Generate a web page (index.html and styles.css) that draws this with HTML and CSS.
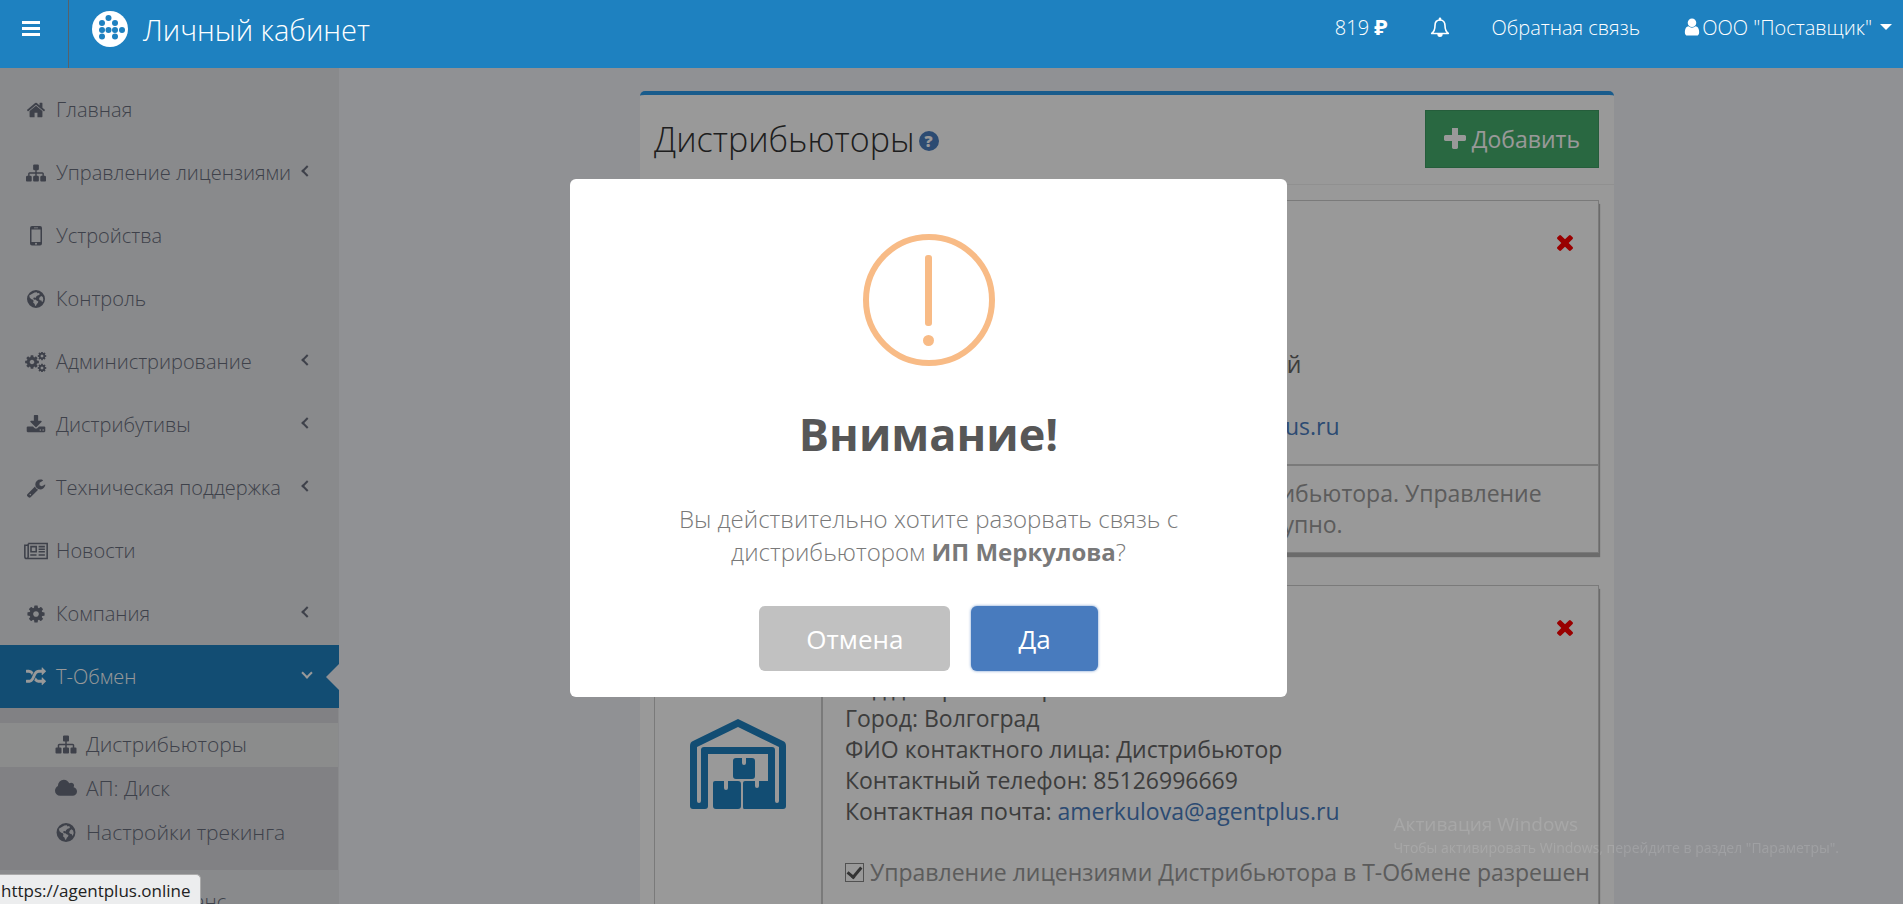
FILE: index.html
```html
<!DOCTYPE html>
<html lang="ru">
<head>
    <meta charset="UTF-8">
    <meta name="viewport" content="width=device-width, initial-scale=1.0">
    <title>Личный кабинет</title>
    <link rel="stylesheet" href="styles.css">
</head>
<body>
    <!-- Icon set -->
    <svg class="sprite" aria-hidden="true">
        <symbol id="i-home" viewBox="0 0 1792 1792"><path d="M1472 992v480q0 26-19 45t-45 19h-384v-384h-256v384h-384q-26 0-45-19t-19-45v-480q0-1 .5-3t.5-3l575-474 575 474q1 2 1 6zm223-69l-62 74q-8 9-21 11h-3q-13 0-21-7l-692-577-692 577q-12 8-24 7-13-2-21-11l-62-74q-8-10-7-23.5t11-21.5l719-599q32-26 76-26t76 26l244 204v-195q0-14 9-23t23-9h192q14 0 23 9t9 23v408l219 182q10 8 11 21.5t-7 23.5z"/></symbol>
        <symbol id="i-sitemap" viewBox="0 0 1792 1792"><path d="M1792 1248v320q0 40-28 68t-68 28h-320q-40 0-68-28t-28-68v-320q0-40 28-68t68-28h96v-192h-512v192h96q40 0 68 28t28 68v320q0 40-28 68t-68 28h-320q-40 0-68-28t-28-68v-320q0-40 28-68t68-28h96v-192h-512v192h96q40 0 68 28t28 68v320q0 40-28 68t-68 28h-320q-40 0-68-28t-28-68v-320q0-40 28-68t68-28h96v-192q0-52 38-90t90-38h512v-192h-96q-40 0-68-28t-28-68v-320q0-40 28-68t68-28h320q40 0 68 28t28 68v320q0 40-28 68t-68 28h-96v192h512q52 0 90 38t38 90v192h96q40 0 68 28t28 68z"/></symbol>
        <symbol id="i-mobile" viewBox="0 0 20 20"><path fill-rule="evenodd" d="M6 0h8a2 2 0 0 1 2 2v15.500a2 2 0 0 1-2 2H6a2 2 0 0 1-2-2V2a2 2 0 0 1 2-2zm-.5 3.500v12.500h9V3.500zm2.500-2v.7h4v-.7zM10 16.700a1 1 0 1 0 0 2 1 1 0 0 0 0-2z"/></symbol>
        <symbol id="i-globe" viewBox="0 0 20 20"><path fill-rule="evenodd" d="M10 1a9 9 0 1 1 0 18 9 9 0 0 1 0-18zM3.200 6.500l.6 2.200 1.700 1.500 1.500.6.6 1.300-.5 1.500 1.600 1.300.4 2 1-.3.7-1.700 1.200-1.200.3-1.300-1.800-.8-1-1-1.400.1-.8-.9.2-1 1.300-.3.9.5.3-1.200 1.500-1.300 1.700-.6.600-.9-.9-1.100-1.500.3-.6-1-2.300.2zM15.200 7l-1.500 1.200-.7 1.700.9 1.300 1.500.2.600 1.700.6-.4.700-2.300-.5-2.400z"/></symbol>
        <symbol id="i-cog" viewBox="0 0 1792 1792"><path d="M1152 896q0-106-75-181t-181-75-181 75-75 181 75 181 181 75 181-75 75-181zm512-109v222q0 12-8 23t-20 13l-185 28q-19 54-39 91 35 50 107 138 10 12 10 25t-9 23q-27 37-99 108t-94 71q-12 0-26-9l-138-108q-44 23-91 38-16 136-29 186-7 28-36 28h-222q-14 0-24.500-8.500t-11.500-21.500l-28-184q-49-16-90-37l-141 107q-10 9-25 9-14 0-25-11-126-114-165-168-7-10-7-23 0-12 8-23 15-21 51-66.500t54-70.500q-27-50-41-99l-183-27q-13-2-21-12.500t-8-23.500v-222q0-12 8-23t19-13l186-28q14-46 39-92-40-57-107-138-10-12-10-24 0-10 9-23 26-36 98.500-107.500t94.500-71.500q13 0 26 10l138 107q44-23 91-38 16-136 29-186 7-28 36-28h222q14 0 24.500 8.500t11.500 21.500l28 184q49 16 90 37l142-107q9-9 24-9 13 0 25 10 129 119 165 170 7 8 7 22 0 12-8 23-15 21-51 66.500t-54 70.500q26 50 41 98l183 28q13 2 21 12.500t8 23.500z"/></symbol>
        <symbol id="i-cogs" viewBox="0 0 24 20"><use href="#i-cog" x="0" y="2" width="16" height="16"/><use href="#i-cog" x="13" y="-1" width="10" height="10"/><use href="#i-cog" x="13" y="11" width="10" height="10"/></symbol>
        <symbol id="i-download" viewBox="0 0 1792 1792"><path d="M1344 1344q0-26-19-45t-45-19-45 19-19 45 19 45 45 19 45-19 19-45zm256 0q0-26-19-45t-45-19-45 19-19 45 19 45 45 19 45-19 19-45zm128-224v320q0 40-28 68t-68 28h-1472q-40 0-68-28t-28-68v-320q0-40 28-68t68-28h465l135 136q58 56 136 56t136-56l136-136h464q40 0 68 28t28 68zm-325-569q17 41-14 70l-448 448q-18 19-45 19t-45-19l-448-448q-31-29-14-70 17-39 59-39h256v-448q0-26 19-45t45-19h256q26 0 45 19t19 45v448h256q42 0 59 39z"/></symbol>
        <symbol id="i-wrench" viewBox="0 0 1792 1792"><path d="M448 1472q0-26-19-45t-45-19-45 19-19 45 19 45 45 19 45-19 19-45zm644-420l-682 682q-37 37-90 37-52 0-91-37l-106-108q-38-36-38-90 0-53 38-91l681-681q39 98 114.500 173.500t173.500 114.500zm634-435q0 39-23 106-47 134-164.500 217.500t-258.500 83.500q-185 0-316.500-131.500t-131.500-316.500 131.500-316.500 316.500-131.500q58 0 121.500 16.500t107.500 46.500q16 11 16 28t-16 28l-293 169v224l193 107q5-3 79-48.500t135.500-81 70.500-35.500q15 0 23.500 10t8.500 25z"/></symbol>
        <symbol id="i-news" viewBox="0 0 23 16"><path fill="none" stroke="currentColor" stroke-width="1.500" d="M4 .8h18.200v14.400H2.500A1.700 1.700 0 0 1 .8 13.500V2.500H4M4 1v12.500q0 1.700-1.500 1.700"/><path fill="none" stroke="currentColor" stroke-width="1.500" d="M6.700 3.800h5v5h-5zM14 3.800h6M14 6.300h6M14 8.800h6M6 11.800h6M14 11.800h6"/></symbol>
        <symbol id="i-random" viewBox="0 0 1792 1792"><path d="M666 481q-60 92-137 273-22-45-37-72.500t-40.500-63.500-51-56.500-63-35-81.500-14.500h-224q-14 0-23-9t-9-23v-192q0-14 9-23t23-9h224q250 0 410 225zm1126 799q0 14-9 23l-320 320q-9 9-23 9-13 0-22.500-9.500t-9.500-22.500v-192q-32 0-85 .5t-81 1-73-1-71-5-64-10.500-63-18.500-58-28.500-59-40-55-53.500-56-69.500q59-93 136-273 22 45 37 72.500t40.500 63.500 51 56.500 63 35 81.500 14.500h256v-192q0-14 9-23t23-9q12 0 24 10l319 319q9 9 9 23zm0-896q0 14-9 23l-320 320q-9 9-23 9-13 0-22.500-9.500t-9.500-22.500v-192h-256q-48 0-87 15t-69 45-51 61.500-45 77.500q-32 62-78 171-29 66-49.500 111t-54 105-64 100-74 83-90 68.500-106.500 42-128 16.500h-224q-14 0-23-9t-9-23v-192q0-14 9-23t23-9h224q48 0 87-15t69-45 51-61.500 45-77.500q32-62 78-171 29-66 49.500-111t54-105 64-100 74-83 90-68.500 106.500-42 128-16.500h256v-192q0-14 9-23t23-9q12 0 24 10l319 319q9 9 9 23z"/></symbol>
        <symbol id="i-cloud" viewBox="-64 0 1920 1792"><path d="M1856 1152q0 159-112.500 271.500t-271.500 112.500h-1088q-185 0-316.500-131.500t-131.500-316.500q0-132 71-241.500t187-163.500q-2-28-2-43 0-212 150-362t362-150q158 0 286.500 88t187.500 230q70-62 166-62 106 0 181 75t75 181q0 75-41 138 129 30 213 134.500t84 239.500z"/></symbol>
        <symbol id="i-user" viewBox="0 0 1792 1792"><path d="M1536 1399q0 109-62.500 187t-150.500 78h-854q-88 0-150.500-78t-62.500-187q0-85 8.500-160.500t31.500-152 58.500-131 94-89 134.500-34.500q131 128 313 128t313-128q76 0 134.500 34.500t94 89 58.500 131 31.500 152 8.500 160.500zm-256-887q0 159-112.500 271.500t-271.500 112.500-271.500-112.500-112.500-271.500 112.500-271.500 271.500-112.500 271.500 112.500 112.500 271.500z"/></symbol>
        <symbol id="i-plus" viewBox="192 192 1408 1408"><path d="M1600 736v192q0 40-28 68t-68 28h-416v416q0 40-28 68t-68 28h-192q-40 0-68-28t-28-68v-416h-416q-40 0-68-28t-28-68v-192q0-40 28-68t68-28h416v-416q0-40 28-68t68-28h192q40 0 68 28t28 68v416h416q40 0 68 28t28 68z"/></symbol>
        <symbol id="i-times" viewBox="302 366 1188 1188"><path d="M1490 1322q0 40-28 68l-136 136q-28 28-68 28t-68-28l-294-294-294 294q-28 28-68 28t-68-28l-136-136q-28-28-28-68t28-68l294-294-294-294q-28-28-28-68t28-68l136-136q28-28 68-28t68 28l294 294 294-294q28-28 68-28t68 28l136 136q28 28 28 68t-28 68l-294 294 294 294q28 28 28 68z"/></symbol>
        <symbol id="i-warehouse" viewBox="0 0 96 90">
            <path fill-rule="evenodd" d="M48 0l45 22q3 1 3 5v60q0 3-3 3H54q-1 0-1-2V64q0-2 2-2h10v5q0 2 2 2t2-2v-5h9V35H18v52q0 3-3 3H3q-3 0-3-3V27q0-4 3-5zm0 8L7 28v54q0 2 2 2t2-2V31q0-3 3-3h68q3 0 3 3v51q0 2 2 2t2-2V28z"/>
            <path d="M25 62h9v7q0 2 2 2t2-2v-7h10q3 0 3 3v22q0 3-3 3H26q-3 0-3-3V64q0-2 2-2zM46 39h6v5q0 2 2 2t2-2v-5h6q3 0 3 3v15q0 3-3 3H46q-3 0-3-3V42q0-3 3-3z"/>
        </symbol>
    </svg>

    <header class="topbar">
        <button class="menu-btn" type="button" aria-label="Меню"><span></span><span></span><span></span></button>
        <a class="brand" href="#">
            <svg class="brand-logo" viewBox="0 0 36 36" aria-hidden="true">
                <circle cx="18" cy="18" r="18" fill="#fff"/>
                <g fill="#1e81c0">
                    <circle cx="16.500" cy="7" r="3"/>
                    <circle cx="10" cy="12" r="3"/><circle cx="23" cy="12" r="3"/>
                    <circle cx="10" cy="19" r="3"/><circle cx="16.500" cy="19" r="3"/><circle cx="23" cy="19" r="3"/><circle cx="30" cy="19" r="3"/>
                    <circle cx="10" cy="25.500" r="3"/><circle cx="23" cy="25.500" r="3"/>
                </g>
            </svg>
            <span>Личный кабинет</span>
        </a>
        <nav class="top-links">
            <a href="#">819 <b>₽</b></a>
            <a href="#" aria-label="Уведомления">
                <svg class="bell" viewBox="0 0 20 20" aria-hidden="true"><path fill="none" stroke="currentColor" stroke-width="1.600" stroke-linejoin="round" d="M10 2.500c-3.500 0-5 2.700-5 5.500 0 4.500-1.300 6.500-3.300 8h16.600c-2-1.500-3.300-3.500-3.300-8 0-2.800-1.500-5.500-5-5.500z"/><path d="M10 0a1.300 1.300 0 0 1 1.300 1.300V3H8.700V1.300A1.300 1.300 0 0 1 10 0zM7.300 16.500h5.400a2.700 3 0 0 1-5.400 0z"/></svg>
            </a>
            <a href="#">Обратная связь</a>
            <a class="account" href="#"><svg class="icon" aria-hidden="true"><use href="#i-user"/></svg>ООО "Поставщик"<i class="caret"></i></a>
        </nav>
    </header>

    <div class="layout">
        <aside class="sidebar">
            <ul class="menu">
                <li><a href="#"><svg class="icon"><use href="#i-home"/></svg>Главная</a></li>
                <li><a href="#"><svg class="icon"><use href="#i-sitemap"/></svg>Управление лицензиями<i class="arrow"></i></a></li>
                <li><a href="#"><svg class="icon"><use href="#i-mobile"/></svg>Устройства</a></li>
                <li><a href="#"><svg class="icon"><use href="#i-globe"/></svg>Контроль</a></li>
                <li><a href="#"><svg class="icon wide"><use href="#i-cogs"/></svg>Администрирование<i class="arrow"></i></a></li>
                <li><a href="#"><svg class="icon"><use href="#i-download"/></svg>Дистрибутивы<i class="arrow"></i></a></li>
                <li><a href="#"><svg class="icon"><use href="#i-wrench"/></svg>Техническая поддержка<i class="arrow"></i></a></li>
                <li><a href="#"><svg class="icon wide"><use href="#i-news"/></svg>Новости</a></li>
                <li><a href="#"><svg class="icon"><use href="#i-cog"/></svg>Компания<i class="arrow"></i></a></li>
                <li class="active">
                    <a href="#"><svg class="icon"><use href="#i-random"/></svg>Т-Обмен<i class="arrow"></i></a>
                    <ul class="submenu">
                        <li class="current"><a href="#"><svg class="icon"><use href="#i-sitemap"/></svg>Дистрибьюторы</a></li>
                        <li><a href="#"><svg class="icon"><use href="#i-cloud"/></svg>АП: Диск</a></li>
                        <li><a href="#"><svg class="icon"><use href="#i-globe"/></svg>Настройки трекинга</a></li>
                    </ul>
                </li>
                <li><a href="#"><svg class="icon"><use href="#i-cog"/></svg>Сервисы и баланс</a></li>
            </ul>
        </aside>

        <main class="content">
            <section class="panel">
                <div class="panel-head">
                    <h1>Дистрибьюторы</h1>
                    <a class="help" href="#">?</a>
                    <button class="btn-add" type="button"><svg><use href="#i-plus"/></svg>Добавить</button>
                </div>
                <div class="panel-body">
                    <article class="card">
                        <div class="card-main">
                            <div class="card-pic"><svg><use href="#i-warehouse"/></svg></div>
                            <div class="card-info">
                                <button class="remove" type="button" aria-label="Удалить"><svg><use href="#i-times"/></svg></button>
                                <p>ООО "Дистрибьютор"</p>
                                <p>ИНН: 3444000001</p>
                                <p>Код дистрибьютора: 1021</p>
                                <p>Город: Волгоград</p>
                                <p>ФИО контактного лица: Маликов Сергей</p>
                                <p>Контактный телефон: 85126996669</p>
                                <p>Контактная почта: <a href="#">amerkulova@agentplus.ru</a></p>
                            </div>
                        </div>
                        <div class="card-note">Ожидаем подтверждение привязки со стороны дистрибьютора. Управление лицензиями Дистрибьютора в Т-Обмене пока не доступно.</div>
                    </article>

                    <article class="card">
                        <div class="card-main">
                            <div class="card-pic"><svg><use href="#i-warehouse"/></svg></div>
                            <div class="card-info">
                                <button class="remove" type="button" aria-label="Удалить"><svg><use href="#i-times"/></svg></button>
                                <p>ИП Меркулова</p>
                                <p>ИНН: 3444000002</p>
                                <p>Код дистрибьютора: 1022</p>
                                <p>Город: Волгоград</p>
                                <p>ФИО контактного лица: Дистрибьютор</p>
                                <p>Контактный телефон: 85126996669</p>
                                <p>Контактная почта: <a href="#">amerkulova@agentplus.ru</a></p>
                                <label class="allow"><input type="checkbox" checked>Управление лицензиями Дистрибьютора в Т-Обмене разрешен</label>
                            </div>
                        </div>
                    </article>
                </div>
            </section>
        </main>
    </div>

    <div class="overlay">
        <div class="modal" role="dialog" aria-labelledby="modal-title">
            <div class="warning-icon"><span class="bar"></span><span class="dot"></span></div>
            <h2 id="modal-title">Внимание!</h2>
            <p>Вы действительно хотите разорвать связь с дистрибьютором <b>ИП Меркулова</b>?</p>
            <div class="modal-buttons">
                <button class="btn-cancel" type="button">Отмена</button>
                <button class="btn-ok" type="button">Да</button>
            </div>
        </div>
    </div>

    <div class="watermark">
        <div class="watermark-title">Активация Windows</div>
        <div>Чтобы активировать Windows, перейдите в раздел "Параметры".</div>
    </div>
    <div class="status">https://agentplus.online</div>
</body>
</html>
```
FILE: styles.css
```css
* {
    box-sizing: border-box;
}

body {
    margin: 0;
    height: 100vh;
    overflow: hidden;
    display: flex;
    flex-direction: column;
    font-family: "Open Sans", "Noto Sans", sans-serif;
    font-size: 20px;
    font-weight: 300;
    color: #666;
    background: #f1f2f7;
}

a {
    color: inherit;
    text-decoration: none;
}

b {
    font-weight: 700;
}

button {
    font-family: inherit;
    cursor: pointer;
}

ul {
    list-style: none;
    margin: 0;
    padding: 0;
}

.sprite {
    display: none;
}

.icon {
    width: 20px;
    height: 20px;
    fill: currentColor;
    flex: none;
}

.icon.wide {
    width: 24px;
    margin: 0 -2px;
}

/* Top bar */
.topbar {
    position: relative;
    z-index: 20;
    flex: none;
    display: flex;
    height: 68px;
    background: #1e81c0;
    color: #fff;
}

.menu-btn {
    width: 69px;
    padding: 21px 28px 0 22px;
    border: none;
    border-right: 1px solid #56616b;
    background: none;
    display: flex;
    flex-direction: column;
    gap: 3px;
}

.menu-btn span {
    width: 18px;
    height: 3px;
    background: #fff;
}

.brand {
    display: flex;
    align-items: center;
    gap: 15px;
    height: 58px;
    padding-left: 23px;
    font-size: 29px;
}

.brand-logo {
    width: 36px;
    height: 36px;
}

.top-links {
    margin-left: auto;
    height: 54px;
    padding-right: 11px;
    display: flex;
    align-items: center;
    gap: 42px;
}

.top-links b {
    font-size: 22px;
    line-height: 20px;
}

.bell {
    display: block;
    width: 20px;
    height: 21px;
    fill: currentColor;
}

.account {
    display: flex;
    align-items: center;
}

.caret {
    margin-left: 8px;
    border: 6px solid transparent;
    border-top-color: #fff;
    border-bottom: none;
}

/* Sidebar */
.layout {
    flex: 1;
    display: flex;
    min-height: 0;
}

.sidebar {
    flex: none;
    width: 339px;
    padding-top: 10px;
    background: #e5e6e9;
    color: #686d7c;
    white-space: nowrap;
}

.menu > li > a {
    position: relative;
    display: flex;
    align-items: center;
    gap: 10px;
    height: 63px;
    padding: 0 28px 0 26px;
}

.arrow {
    width: 8px;
    height: 8px;
    margin: 0 0 4px auto;
    border: solid currentColor;
    border-width: 0 0 2px 2px;
    transform: rotate(45deg);
}

.active > a {
    background: #1e81c0;
    color: #fff;
}

.active > a .arrow {
    margin-bottom: 8px;
    transform: rotate(-45deg);
}

.active > a::after {
    content: "";
    position: absolute;
    right: 0;
    border: 13px solid transparent;
    border-left: none;
    border-right-color: #f1f2f7;
}

.submenu {
    margin-right: 1px;
    padding: 15px 0;
    background: #d7d8dc;
    font-size: 21px;
}

.submenu a {
    display: flex;
    align-items: center;
    gap: 9px;
    height: 44px;
    padding: 0 0 2px 55px;
}

.submenu .icon {
    width: 22px;
    height: 21px;
}

.submenu .current {
    background: #e8e9e9;
}

/* Content */
.content {
    flex: 1;
    padding: 23px 20px 0 32px;
}

.panel {
    max-width: 974px;
    margin: 0 auto;
    border-top: 4px solid #2a9ae9;
    border-radius: 5px 5px 0 0;
    background: #fff;
}

.panel-head {
    display: flex;
    align-items: center;
    height: 90px;
    padding: 0 15px 2px 14px;
    border-bottom: 1px solid #f1f1f1;
}

.panel-head h1 {
    margin: 0;
    font-size: 34px;
    font-weight: 300;
    line-height: 46px;
    color: #333;
}

.help {
    width: 20px;
    height: 20px;
    margin: 4px 0 0 4px;
    border-radius: 50%;
    background: #4a7dbf;
    color: #fff;
    font-size: 16px;
    font-weight: 800;
    line-height: 20px;
    text-align: center;
}

.btn-add {
    display: flex;
    align-items: center;
    gap: 6px;
    height: 58px;
    margin-left: auto;
    padding: 0 18px;
    border: 1px solid #3e9b63;
    background: #45ad6d;
    color: #fff;
    font-size: 23px;
}

.btn-add svg {
    width: 22px;
    height: 22px;
    fill: currentColor;
}

.panel-body {
    padding: 15px 15px 0 14px;
}

.card {
    margin-bottom: 32px;
    border: 1px solid #ccc;
    box-shadow: 1px 4px 1px #b3b3b3;
    font-size: 23px;
    font-weight: 400;
    line-height: 31px;
}

.card-main {
    display: flex;
    min-height: 263px;
}

.card-pic {
    flex: none;
    width: 168px;
    padding-top: 133px;
    border-right: 2px solid #ccc;
    text-align: center;
}

.card-pic svg {
    width: 96px;
    height: 90px;
    fill: #1e81c0;
}

.card-info {
    flex: 1;
    min-width: 0;
    padding: 24px 22px 20px;
}

.card-info p {
    margin: 0;
}

.card-info a {
    color: #4a7dbf;
}

.remove {
    float: right;
    margin: 10px 3px 0;
    padding: 0;
    border: none;
    background: none;
}

.remove svg {
    display: block;
    width: 16px;
    height: 16px;
    fill: #f00;
}

.allow {
    display: flex;
    align-items: center;
    gap: 6px;
    margin-top: 30px;
    white-space: nowrap;
    color: #999;
}

.allow input {
    appearance: none;
    flex: none;
    width: 19px;
    height: 19px;
    margin: 0;
    border: 1px solid #888;
    display: grid;
    place-items: center;
}

.allow input:checked::after {
    content: "";
    width: 6px;
    height: 11px;
    margin-bottom: 4px;
    border: solid #555;
    border-width: 0 3px 3px 0;
    transform: rotate(40deg);
}

.card-note {
    padding: 12px 22px;
    border-top: 2px solid #ccc;
    color: #999;
}

/* Confirm dialog */
.overlay {
    position: fixed;
    inset: 0;
    z-index: 10;
    display: flex;
    align-items: center;
    justify-content: center;
    padding: 0 46px 28px 0;
    background: rgba(0, 0, 0, 0.4);
}

.modal {
    width: 717px;
    padding: 55px 80px 26px;
    border-radius: 6px;
    background: #fff;
    text-align: center;
}

.warning-icon {
    display: flex;
    flex-direction: column;
    align-items: center;
    gap: 9px;
    width: 132px;
    height: 132px;
    margin: 0 auto;
    padding-top: 15px;
    border: 6px solid #f8bb86;
    border-radius: 50%;
}

.bar {
    width: 7px;
    height: 71px;
    border-radius: 3px;
    background: #f8bb86;
}

.dot {
    width: 11px;
    height: 11px;
    border-radius: 50%;
    background: #f8bb86;
}

.modal h2 {
    margin: 38px 0;
    font-size: 45px;
    font-weight: 700;
    line-height: 60px;
    color: #575757;
}

.modal p {
    margin: 0;
    font-size: 24px;
    line-height: 33px;
    color: #797979;
}

.modal-buttons {
    display: flex;
    justify-content: center;
    gap: 21px;
    margin-top: 38px;
}

.modal-buttons button {
    height: 65px;
    padding: 0 47px;
    border: none;
    border-radius: 6px;
    color: #fff;
    font-size: 26px;
}

.btn-cancel {
    background: #c1c1c1;
}

.btn-ok {
    background: #487bbe;
    box-shadow: 0 0 3px rgba(72, 123, 190, 0.8);
}

/* System overlays */
.watermark {
    position: fixed;
    right: 64px;
    bottom: 45px;
    z-index: 30;
    color: rgba(255, 255, 255, 0.14);
    font-size: 14px;
    font-weight: 400;
    line-height: 22px;
}

.watermark-title {
    font-size: 19px;
    line-height: 26px;
}

.status {
    position: fixed;
    left: 0;
    bottom: 0;
    z-index: 30;
    width: 201px;
    height: 30px;
    padding-left: 1px;
    border-top: 1px solid #aaa;
    border-right: 1px solid #aaa;
    border-radius: 0 5px 0 0;
    background: #ecedee;
    color: #222;
    font-size: 17px;
    font-weight: 400;
    line-height: 31px;
}
```
